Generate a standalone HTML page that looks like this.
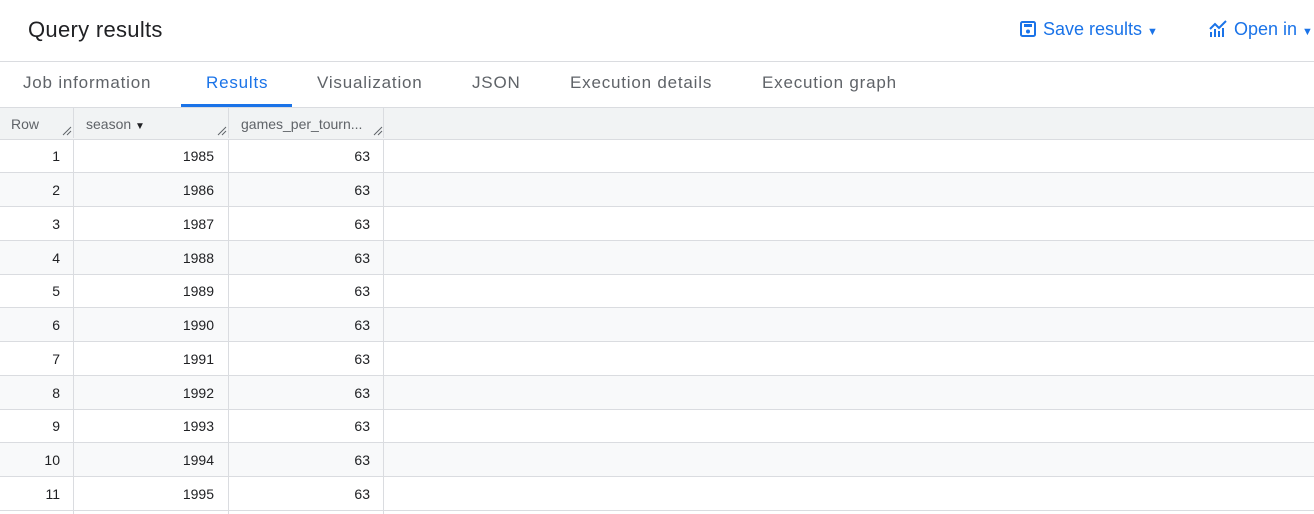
<!DOCTYPE html>
<html><head><style>
body{margin:0;width:1314px;height:514px;overflow:hidden;background:#fff;font-family:"Liberation Sans",Arial,sans-serif;position:relative}
.a{position:absolute}
.title{left:28px;top:17px;font-size:22px;color:#202124;letter-spacing:0.3px}
.btn{color:#1a73e8;font-size:18px;top:19px}
.tab{top:73px;font-size:17px;color:#5f6368;letter-spacing:0.8px}
.hdr{left:0;top:107px;width:1314px;height:31px;background:#f1f3f4;border-bottom:1px solid #dadce0;border-top:1px solid #dadce0}
.hc{font-size:14px;color:#5f6368;top:116px}
.row{left:0;width:1314px;height:33px;border-bottom:1px solid #dadce0;font-size:14px;color:#202124}
.row span{position:absolute;top:9px;text-align:right}
.vl{top:139px;width:1px;height:375px;background:#dadce0}
.rs{top:126px}
</style></head><body>
<div class="a title">Query results</div>
<div class="a btn" style="left:1019px">
<svg width="18" height="18" viewBox="0 0 18 18" style="vertical-align:-3px;margin-right:6px"><rect x="2" y="2" width="14" height="14" rx="1.5" fill="none" stroke="#1a73e8" stroke-width="2"/><rect x="5" y="4" width="8" height="3" fill="#1a73e8"/><circle cx="9" cy="11.5" r="2" fill="#1a73e8"/></svg>Save results <span style="font-size:11px">▼</span></div>
<div class="a btn" style="left:1208px">
<svg width="20" height="18" viewBox="0 0 20 18" style="vertical-align:-3px;margin-right:6px"><path d="M2 9L7 4L11 8L18 1" fill="none" stroke="#1a73e8" stroke-width="2"/><rect x="2" y="12" width="2" height="5" fill="#1a73e8"/><rect x="6" y="9" width="2" height="8" fill="#1a73e8"/><rect x="10" y="11" width="2" height="6" fill="#1a73e8"/><rect x="14" y="8" width="2" height="9" fill="#1a73e8"/></svg>Open in <span style="font-size:11px">▼</span></div>
<div class="a" style="left:0;top:61px;width:1314px;height:1px;background:#dadce0"></div>
<div class="a tab" style="left:23px">Job information</div>
<div class="a tab" style="left:206px;color:#1a73e8">Results</div>
<div class="a tab" style="left:317px">Visualization</div>
<div class="a tab" style="left:472px">JSON</div>
<div class="a tab" style="left:570px">Execution details</div>
<div class="a tab" style="left:762px">Execution graph</div>
<div class="a" style="left:181px;top:104px;width:111px;height:3px;background:#1a73e8"></div>
<div class="a hdr"></div>
<div class="a hc" style="left:11px">Row</div>
<div class="a hc" style="left:86px">season <span style="font-size:10px;color:#202124">▼</span></div>
<div class="a hc" style="left:241px">games_per_tourn...</div>
<svg class="a rs" style="left:62px" width="10" height="10" viewBox="0 0 10 10"><path d="M1 9L9 1M5 9L9 5" stroke="#5f6368" stroke-width="1"/></svg>
<svg class="a rs" style="left:217px" width="10" height="10" viewBox="0 0 10 10"><path d="M1 9L9 1M5 9L9 5" stroke="#5f6368" stroke-width="1"/></svg>
<svg class="a rs" style="left:373px" width="10" height="10" viewBox="0 0 10 10"><path d="M1 9L9 1M5 9L9 5" stroke="#5f6368" stroke-width="1"/></svg>
<div class="a row" style="top:139px;"><span style="right:1254px">1</span><span style="right:1100px">1985</span><span style="right:944px">63</span></div>
<div class="a row" style="top:173px;background:#f8f9fa"><span style="right:1254px">2</span><span style="right:1100px">1986</span><span style="right:944px">63</span></div>
<div class="a row" style="top:207px;"><span style="right:1254px">3</span><span style="right:1100px">1987</span><span style="right:944px">63</span></div>
<div class="a row" style="top:241px;background:#f8f9fa"><span style="right:1254px">4</span><span style="right:1100px">1988</span><span style="right:944px">63</span></div>
<div class="a row" style="top:274px;"><span style="right:1254px">5</span><span style="right:1100px">1989</span><span style="right:944px">63</span></div>
<div class="a row" style="top:308px;background:#f8f9fa"><span style="right:1254px">6</span><span style="right:1100px">1990</span><span style="right:944px">63</span></div>
<div class="a row" style="top:342px;"><span style="right:1254px">7</span><span style="right:1100px">1991</span><span style="right:944px">63</span></div>
<div class="a row" style="top:376px;background:#f8f9fa"><span style="right:1254px">8</span><span style="right:1100px">1992</span><span style="right:944px">63</span></div>
<div class="a row" style="top:409px;"><span style="right:1254px">9</span><span style="right:1100px">1993</span><span style="right:944px">63</span></div>
<div class="a row" style="top:443px;background:#f8f9fa"><span style="right:1254px">10</span><span style="right:1100px">1994</span><span style="right:944px">63</span></div>
<div class="a row" style="top:477px;"><span style="right:1254px">11</span><span style="right:1100px">1995</span><span style="right:944px">63</span></div>
<div class="a vl" style="left:73px"></div>
<div class="a vl" style="left:228px"></div>
<div class="a vl" style="left:383px"></div>
<div class="a" style="left:73px;top:108px;width:1px;height:30px;background:#dadce0"></div>
<div class="a" style="left:228px;top:108px;width:1px;height:30px;background:#dadce0"></div>
<div class="a" style="left:383px;top:108px;width:1px;height:30px;background:#dadce0"></div>
</body></html>
